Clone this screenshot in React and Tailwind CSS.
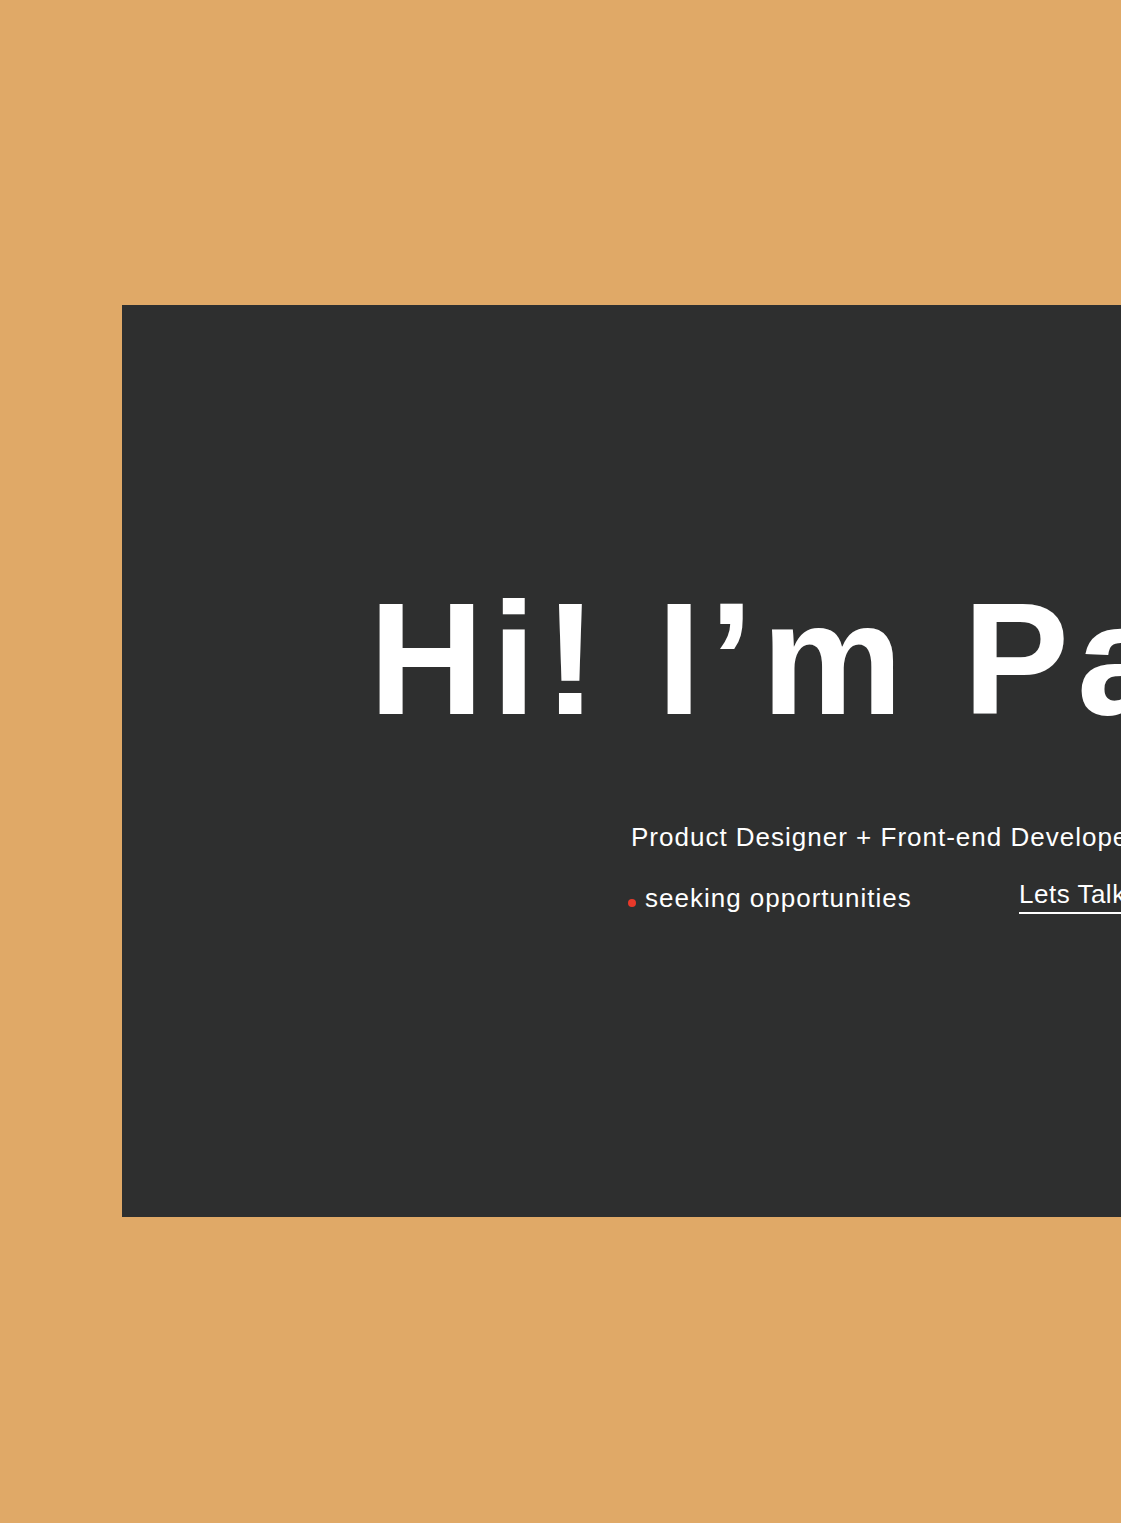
const Hero = () => {
  return (
    <section className="w-[1400px] h-[912px] flex-none bg-[#2e2f2f] pt-[275px] pl-[247px] text-white font-['Liberation_Sans',Arial,sans-serif]">
      {/* big headline, runs past the right edge */}
      <h1 className="whitespace-nowrap text-[159px] leading-none font-bold tracking-[8px]">
        Hi! I’m Patrick
      </h1>

      <div className="mt-[82px] ml-[262px]">
        <p className="text-[26px] leading-8 tracking-[1px] whitespace-nowrap">
          Product Designer + Front-end Developer
        </p>
        <div className="mt-[25px] -ml-[3px] flex items-start">
          <div className="w-[391px] mt-[4px] flex items-center">
            <span className="mt-[9px] w-2 h-2 rounded-full bg-[#e8392a]"></span>
            <span className="ml-[9px] text-[26px] leading-8 tracking-[1px] whitespace-nowrap">seeking opportunities</span>
          </div>
          <a href="#contact" className="pb-[2px] border-b-2 border-white text-[26px] leading-8 tracking-[0.5px] whitespace-nowrap">
            Lets Talk
          </a>
        </div>
      </div>
    </section>
  )
}

export default function App() {
  return (
    <main className="w-full h-[1523px] overflow-hidden bg-[#e0a967] pt-[305px] pl-[122px] flex">
      <Hero />
    </main>
  )
}
